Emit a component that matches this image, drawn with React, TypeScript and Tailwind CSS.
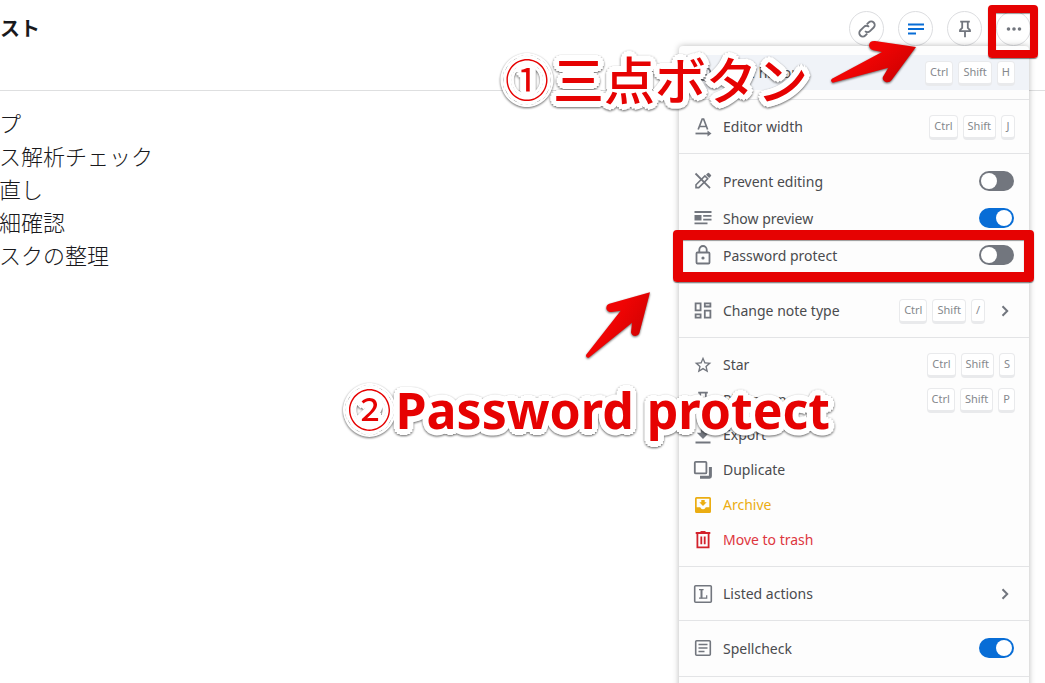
import type { ReactNode } from 'react'
import { MdStarOutline } from 'react-icons/md'

function Icon({ children, className = 'text-[#72767e]' }: { children: ReactNode; className?: string }) {
  return (
    <svg viewBox="0 0 20 20" fill="none" stroke="currentColor" strokeWidth="1.8" className={`size-5 shrink-0 ${className}`}>
      {children}
    </svg>
  )
}

const HistoryIcon = () => (
  <Icon>
    <path d="M3.5 10a7 7 0 1 1 2 5M1.2 8l2.3 3 2.7-2.6M10.5 6v4.4l3 1.8" />
  </Icon>
)

const WidthIcon = () => (
  <Icon>
    <path d="M5.2 12.5 9.2 2h1.4l4 10.5M6.5 9.5h6.8" strokeWidth="1.7" />
    <path d="M2.5 16.5h13" />
    <path d="M14.5 13.5l4 3-4 3z" fill="currentColor" stroke="none" />
  </Icon>
)

const PencilOffIcon = () => (
  <Icon>
    <path d="M2.5 2.5 17 17.2" />
    <path d="M3 16.6v-2.8l8.9-8.9 2.8 2.8L5.8 16.6z" strokeWidth="1.6" />
    <path d="m13 3.7 1.8-1.8q.6-.5 1.2 0l2 2q.5.6 0 1.2L16.2 6.9z" fill="currentColor" stroke="none" />
  </Icon>
)

const PreviewIcon = () => (
  <Icon>
    <path d="M1.5 4h17M10.2 7.8h8.3M10.2 11.6h8.3M1.5 15.4h13" />
    <path d="M1.5 7h7v5.5h-7z" fill="currentColor" stroke="none" />
  </Icon>
)

const LockIcon = () => (
  <Icon>
    <rect x="3.5" y="7.5" width="13" height="11" rx="1" />
    <path d="M6.3 7.5V4.7a3.7 3.7 0 0 1 7.4 0v2.8" />
    <circle cx="10" cy="13" r="1.6" fill="currentColor" stroke="none" />
  </Icon>
)

const TypeIcon = () => (
  <Icon>
    <path d="M2.6 2.3h5v7h-5zM11.8 2.3h5.6v3.2h-5.6zM2.6 13.3h5v3.4h-5zM11.8 9.6h5.6v7.1h-5.6z" />
  </Icon>
)

function PinIcon() {
  return (
    <Icon>
      <path d="M5.2 2.6h9.6M7.2 2.6v6.2L5 11.2v1h10v-1l-2.2-2.4V2.6M10 12.2v6" />
    </Icon>
  )
}

const ExportIcon = () => (
  <Icon>
    <path d="M2.5 17.5h15" strokeWidth="2" />
    <path d="M7.8 2h4.4v5.8h4L10 14 3.8 7.8h4z" fill="currentColor" stroke="none" />
  </Icon>
)

const DuplicateIcon = () => (
  <Icon>
    <rect x="1.8" y="1.8" width="11.6" height="11.6" rx="1" />
    <path d="M7 17.2h9.5q.9 0 .9-.9V7" strokeWidth="3" />
  </Icon>
)

const ArchiveIcon = () => (
  <Icon className="text-[#ebad12]">
    <path
      fillRule="evenodd"
      d="M3.5 2h13q1.5 0 1.5 1.5v13q0 1.5-1.5 1.5h-13Q2 18 2 16.5v-13Q2 2 3.5 2zM3.7 3.7v8.6h3.5q.6 2 2.8 2t2.8-2h3.5V3.7z"
      fill="currentColor"
      stroke="none"
    />
    <path d="M8.3 5h3.4v2.3h2L10 11 6.3 7.3h2z" fill="currentColor" stroke="none" />
  </Icon>
)

const TrashIcon = () => (
  <Icon className="text-[#d3222c]">
    <path d="M2.7 3h14.6M7.5 2h5M4.4 3v14.3h11.2V3M8.3 6.5v7.8M11.7 6.5v7.8" />
  </Icon>
)

const ListedIcon = () => (
  <Icon>
    <rect x="1.7" y="1.7" width="16.6" height="16.6" rx="1" strokeWidth="1.6" />
    <path d="M6 5.7h4.6M6 14.2h7.7v-3" strokeWidth="1.2" />
    <path d="M8.5 5.5v8.8" strokeWidth="2" />
  </Icon>
)

const NotesIcon = () => (
  <Icon>
    <rect x="2.7" y="2.7" width="14.6" height="14.6" rx="1" strokeWidth="1.6" />
    <path d="M5.5 6.5h9M5.5 10h9M5.5 13.5h6" strokeWidth="1.6" />
  </Icon>
)

const Chevron = () => (
  <Icon>
    <path d="m7.5 5.3 4.7 4.7-4.7 4.7" strokeWidth="2" />
  </Icon>
)

function Keys({ keys }: { keys: string[] }) {
  return (
    <span className="flex gap-[5px]">
      {keys.map((key) => (
        <kbd
          key={key}
          className="h-[25px] min-w-[14px] rounded border border-b-[3px] border-[#e9eaec] bg-white px-1 text-center font-[Noto_Sans,sans-serif] text-[11px] leading-5 text-[#85888d]"
        >
          {key}
        </kbd>
      ))}
    </span>
  )
}

type ItemProps = {
  icon: ReactNode
  label: string
  keys?: string[]
  submenu?: boolean
  className?: string
}

function Item({ icon, label, keys, submenu, className = '' }: ItemProps) {
  return (
    <button type="button" className={`flex h-[35px] w-full items-center gap-2.5 px-3.5 pt-px text-left ${className}`}>
      {icon}
      <span className="flex-1">{label}</span>
      {keys && <Keys keys={keys} />}
      {submenu && <Chevron />}
    </button>
  )
}

function SwitchItem({ icon, label, on = false }: { icon: ReactNode; label: string; on?: boolean }) {
  return (
    <label className="flex h-[37px] items-center gap-2.5 pr-[15px] pb-px pl-3.5">
      {icon}
      <span className="flex-1 pt-0.5">{label}</span>
      <input
        type="checkbox"
        role="switch"
        defaultChecked={on}
        className="h-5 w-[35px] appearance-none rounded-full bg-[#72767e] p-0.5 before:block before:size-4 before:rounded-full before:bg-white checked:bg-[#086dd6] checked:before:translate-x-[15px]"
      />
    </label>
  )
}

const Separator = () => <hr className="my-[9px] border-[#e3e4e6]" />

function NoteMenu() {
  return (
    <div className="absolute top-[46px] right-4 w-[350px] rounded bg-[#fdfdfd] pt-[9px] pb-3 text-[14px] leading-5 text-[#4a4b4e] shadow-[0_0_6px_rgba(0,0,0,0.28)]">
      <Item icon={<HistoryIcon />} label="Note history" keys={['Ctrl', 'Shift', 'H']} className="bg-[#f0f3f8]" />
      <Separator />
      <Item icon={<WidthIcon />} label="Editor width" keys={['Ctrl', 'Shift', 'J']} />
      <Separator />
      <SwitchItem icon={<PencilOffIcon />} label="Prevent editing" />
      <SwitchItem icon={<PreviewIcon />} label="Show preview" on />
      <SwitchItem icon={<LockIcon />} label="Password protect" />
      <Separator />
      <Item icon={<TypeIcon />} label="Change note type" keys={['Ctrl', 'Shift', '/']} submenu />
      <Separator />
      <Item icon={<MdStarOutline className="size-5 text-[#72767e]" />} label="Star" keys={['Ctrl', 'Shift', 'S']} />
      <Item icon={<PinIcon />} label="Pin to top" keys={['Ctrl', 'Shift', 'P']} />
      <Item icon={<ExportIcon />} label="Export" />
      <Item icon={<DuplicateIcon />} label="Duplicate" />
      <Item icon={<ArchiveIcon />} label="Archive" className="text-[#ebad12]" />
      <Item icon={<TrashIcon />} label="Move to trash" className="text-[#dd3740]" />
      <Separator />
      <Item icon={<ListedIcon />} label="Listed actions" submenu />
      <Separator />
      <SwitchItem icon={<NotesIcon />} label="Spellcheck" on />
      <Separator />
    </div>
  )
}

function RoundButton({ label, children }: { label: string; children: ReactNode }) {
  return (
    <button type="button" aria-label={label} className="flex size-[35px] items-center justify-center rounded-full border border-[#dcdde0]">
      {children}
    </button>
  )
}

function Header() {
  return (
    <header className="flex h-[91px] items-start justify-between border-b border-[#dedfe0] pt-[11px] pr-3.5">
      <h1 className="text-[20px] leading-9 font-bold text-[#19191c]">スト</h1>
      <div className="flex gap-3.5">
        <RoundButton label="Linked items">
          <Icon>
            <path d="M8 12.2a3.5 3.5 0 0 0 5 0l3.7-3.7a3.5 3.5 0 0 0-5-5L9.8 5.4" />
            <path d="M12 7.8a3.5 3.5 0 0 0-5 0l-3.7 3.7a3.5 3.5 0 0 0 5 5l1.9-1.9" />
          </Icon>
        </RoundButton>
        <RoundButton label="Note type">
          <Icon className="text-[#086dd6]">
            <path d="M2 5.5h16M2 10h16M2 14.5h8" />
          </Icon>
        </RoundButton>
        <RoundButton label="Pin">
          <PinIcon />
        </RoundButton>
        <RoundButton label="Note options">
          <Icon>
            <path
              d="M4.5 8.2a1.8 1.8 0 1 1 0 3.6 1.8 1.8 0 0 1 0-3.6zM10 8.2a1.8 1.8 0 1 1 0 3.6 1.8 1.8 0 0 1 0-3.6zM15.5 8.2a1.8 1.8 0 1 1 0 3.6 1.8 1.8 0 0 1 0-3.6z"
              fill="currentColor"
              stroke="none"
            />
          </Icon>
        </RoundButton>
      </div>
    </header>
  )
}

// the stroke fills the white halo close to the letters, the shadows round it off
const callout =
  'absolute flex items-center whitespace-nowrap text-[50px] leading-[68px] text-[#e60202] [-webkit-text-stroke:6px_white] [paint-order:stroke_fill] [text-shadow:6px_0_white,5px_3px_white,3px_5px_white,0_6px_white,-3px_5px_white,-5px_3px_white,-6px_0_white,-5px_-3px_white,-3px_-5px_white,0_-6px_white,3px_-5px_white,5px_-3px_white] drop-shadow-[0_1px_1px_rgba(0,0,0,0.6)]'

const frame = 'absolute rounded border-[#e60202] shadow-[0_1px_1px_rgba(0,0,0,0.5),inset_0_1px_1px_rgba(0,0,0,0.4)]'

function Annotations() {
  return (
    <div className="pointer-events-none">
      <div className={`${frame} top-[5px] right-[7px] h-[53px] w-[50px] border-8`} />
      <div className={`${frame} top-[230px] right-[11px] h-[52px] w-[361px] border-10`} />
      <p className={`${callout} top-[46px] right-[237px] gap-1`}>
        <span className="text-[44px] font-normal">①</span>
        <span className="text-[51px] font-medium">三点ボタン</span>
      </p>
      <p className={`${callout} top-[376px] right-[215px] gap-1`}>
        <span className="text-[44px] font-normal">②</span>
        <b>Password protect</b>
      </p>
      <svg viewBox="30 108 270 162" className="absolute top-9 right-[125px] h-[54px] w-[90px] drop-shadow-[0_1px_1px_rgba(0,0,0,0.6)]">
        <defs>
          <linearGradient id="red" x1="0" y1="0" x2="1" y2="0.6">
            <stop offset="0.5" stopColor="#f00404" />
            <stop offset="0.9" stopColor="#d60202" />
          </linearGradient>
        </defs>
        <path d="M288 141 165 123Q148 122 147 136 148 148 160 151L186 156 36 236Q29 243 38 248L205 203 189 230Q185 242 199 247 210 248 215 240Z" fill="url(#red)" />
      </svg>
      <svg viewBox="750 30 225 225" className="absolute top-[290px] right-[390px] size-[75px] drop-shadow-[0_1px_1px_rgba(0,0,0,0.6)]">
        <path d="M960 37 838 71Q828 74 829 86 832 96 845 96L872 92 768 225Q768 234 776 233L906 128 903 157Q905 168 916 168 925 168 928 160Z" fill="url(#red)" />
      </svg>
    </div>
  )
}

export default function App() {
  return (
    <div className="relative h-screen overflow-hidden bg-white font-[Noto_Sans,Noto_Sans_CJK_JP,sans-serif]">
      <Header />
      <textarea
        aria-label="Note"
        spellCheck={false}
        className="-ml-px block h-[calc(100vh-91px)] w-full resize-none pt-4 text-[22px] leading-[33px] font-light text-[#19191c] outline-none"
        defaultValue={'プ\nス解析チェック\n直し\n細確認\nスクの整理'}
      />
      <NoteMenu />
      <Annotations />
    </div>
  )
}
